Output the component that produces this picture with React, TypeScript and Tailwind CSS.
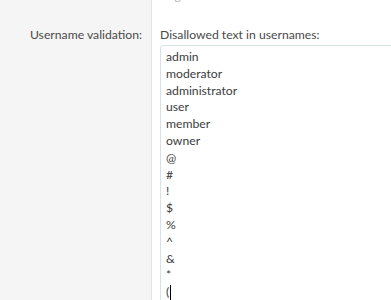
const words = ["admin", "moderator", "administrator", "user", "member", "owner", "@", "#", "!", "$", "%", "^", "&", "*"];

export default function App() {
  return (
    <div className="flex h-[300px] w-[391px] overflow-hidden bg-white font-['Lato',sans-serif] text-[12.2px] text-[#4a4a4a]">
      {/* label column */}
      <div className="w-[152px] shrink-0 border-r border-[#e4e4e4] bg-[#f5f5f5] pr-[9px] pt-[26px] text-right leading-[18px]">
        <span>Username validation:</span>
      </div>

      {/* field column */}
      <div className="min-w-0 flex-1 overflow-hidden pl-[8px]">
        <div className="-mt-[12px] h-[16px] pl-[2px] text-[12px] leading-[16px] text-[#b5b5b5]">Log</div>
        <div className="mt-[22px] leading-[18px]">Disallowed text in usernames:</div>
        <div className="mt-[1px] w-[260px] rounded-[3px] border border-[#d6e2e8] bg-white px-[5px] pt-[3px] leading-[16.8px] text-[#3c3c3c]">
          {words.map((w) => (
            <div key={w}>{w}</div>
          ))}
          <div className="flex items-center">
            (<span className="ml-[1px] inline-block h-[15px] w-[1px] bg-black" />
          </div>
        </div>
      </div>
    </div>
  );
}
